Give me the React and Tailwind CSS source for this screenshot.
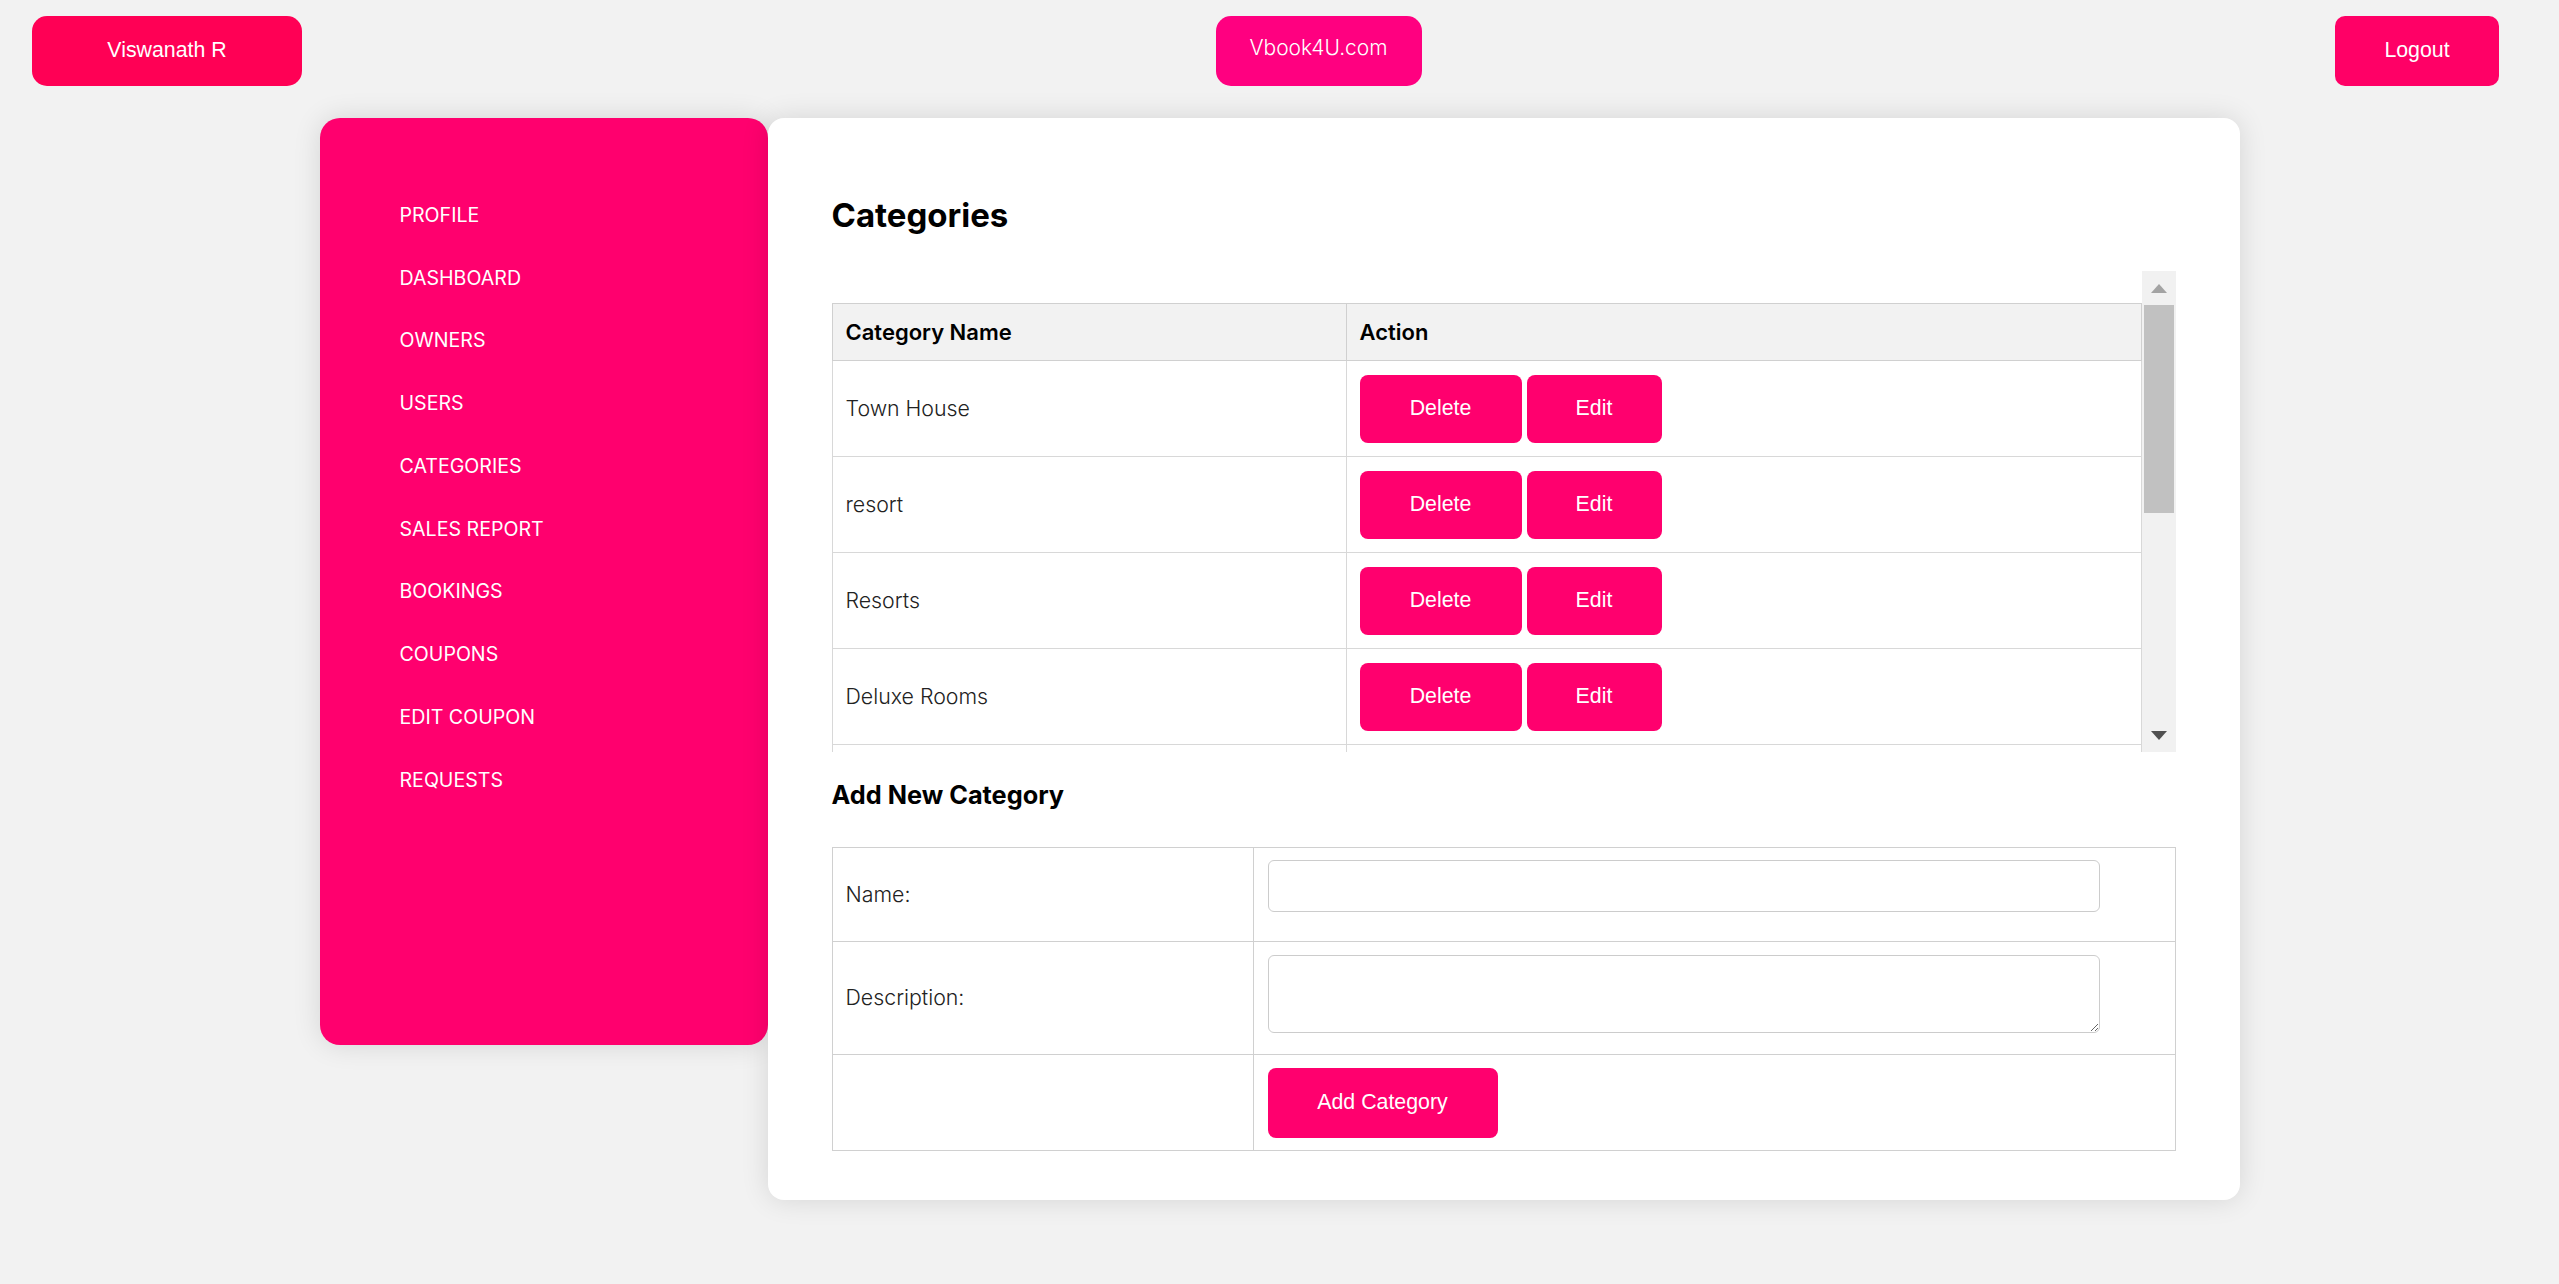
import React from "react";

const navItems = [
  "PROFILE",
  "DASHBOARD",
  "OWNERS",
  "USERS",
  "CATEGORIES",
  "SALES REPORT",
  "BOOKINGS",
  "COUPONS",
  "EDIT COUPON",
  "REQUESTS",
];

const categories = ["Town House", "resort", "Resorts", "Deluxe Rooms"];

function Scrollbar() {
  return (
    <div className="flex h-full w-[34px] flex-col bg-[#f1f1f1]">
      <div className="flex h-[34px] items-center justify-center">
        <svg width="16" height="9" viewBox="0 0 16 9">
          <polygon points="8,0 16,9 0,9" fill="#a3a3a3" />
        </svg>
      </div>
      <div className="mx-[2px] h-[208px] bg-[#c1c1c1]" />
      <div className="flex-1" />
      <div className="flex h-[34px] items-center justify-center">
        <svg width="16" height="9" viewBox="0 0 16 9">
          <polygon points="0,0 16,0 8,9" fill="#505050" />
        </svg>
      </div>
    </div>
  );
}

export default function App() {
  return (
    <div className="min-h-screen bg-[#f2f2f2] font-['Inter',sans-serif]">
      <header className="flex items-start justify-between pl-[32px] pr-[60px] pt-[16px]">
        <button className="h-[70px] w-[270px] rounded-[15px] bg-[#ff0055] font-['Liberation_Sans',Arial,sans-serif] text-[21.33px] text-white">
          Viswanath R
        </button>
        <button className="h-[70px] w-[206px] rounded-[15px] bg-[#ff0080] pb-[6px] text-[21px] font-light text-white">
          Vbook4U.com
        </button>
        <button className="h-[70px] w-[164px] rounded-[10px] bg-[#ff0066] font-['Liberation_Sans',Arial,sans-serif] text-[21.33px] text-white">
          Logout
        </button>
      </header>

      <div className="mx-auto mt-[32px] flex w-[1920px] items-start">
        <aside className="h-[927px] w-[448px] shrink-0 rounded-[20px] bg-[#ff006e] pl-[80px] pt-[66px] shadow-[0_0_28px_rgba(0,0,0,0.12)]">
          <nav className="flex flex-col">
            {navItems.map((item) => (
              <a
                key={item}
                className="flex h-[62.8px] items-center text-[19.6px] text-white"
              >
                {item}
              </a>
            ))}
          </nav>
        </aside>

        <main className="w-[1472px] shrink-0 rounded-[16px] bg-white px-[64px] pb-[49px] pt-[73px] shadow-[0_0_28px_rgba(0,0,0,0.12)]">
          <h2 className="text-[33px] font-bold leading-[48px] text-black">
            Categories
          </h2>

          <div className="mt-[32px] flex h-[481px]">
            <div className="h-full flex-1 overflow-hidden pt-[32px]">
              <table className="w-full table-fixed border-collapse text-[21.33px] text-[#222]">
                <colgroup>
                  <col className="w-[514px]" />
                  <col />
                </colgroup>
                <thead>
                  <tr className="h-[57px] bg-[#f2f2f2]">
                    <th className="border border-[#d0d0d0] px-[13px] text-left text-[22px] font-semibold text-black">
                      Category Name
                    </th>
                    <th className="border border-[#d0d0d0] px-[13px] text-left text-[22px] font-semibold text-black">
                      Action
                    </th>
                  </tr>
                </thead>
                <tbody>
                  {categories.map((c) => (
                    <tr key={c} className="h-[96px]">
                      <td className="border border-[#d8d8d8] px-[13px] font-light">
                        {c}
                      </td>
                      <td className="border border-[#d8d8d8] px-[13px]">
                        <div className="flex gap-[5px]">
                          <button className="h-[68px] w-[162px] rounded-[8px] bg-[#ff006e] font-['Liberation_Sans',Arial,sans-serif] text-[21.33px] text-white">
                            Delete
                          </button>
                          <button className="h-[68px] w-[135px] rounded-[8px] bg-[#ff006e] font-['Liberation_Sans',Arial,sans-serif] text-[21.33px] text-white">
                            Edit
                          </button>
                        </div>
                      </td>
                    </tr>
                  ))}
                  <tr className="h-[96px]">
                    <td className="border border-[#d8d8d8]"></td>
                    <td className="border border-[#d8d8d8]"></td>
                  </tr>
                </tbody>
              </table>
            </div>
            <Scrollbar />
          </div>

          <h3 className="mt-[25px] text-[25.3px] font-bold leading-[36px] text-black">
            Add New Category
          </h3>

          <table className="mt-[34px] w-full table-fixed border-collapse text-[21.33px] text-[#222]">
            <colgroup>
              <col className="w-[421px]" />
              <col />
            </colgroup>
            <tbody>
              <tr className="h-[94px]">
                <td className="border border-[#d0d0d0] px-[13px] font-light">
                  Name:
                </td>
                <td className="border border-[#d0d0d0] px-[14px] pb-[22px] pt-[12px] align-top">
                  <input
                    type="text"
                    className="block h-[52px] w-[832px] rounded-[6px] border border-[#cccccc] bg-white"
                  />
                </td>
              </tr>
              <tr className="h-[113px]">
                <td className="border border-[#d0d0d0] px-[13px] font-light">
                  Description:
                </td>
                <td className="border border-[#d0d0d0] px-[14px] pb-[20px] pt-[13px] align-top">
                  <textarea className="block h-[78px] w-[832px] resize rounded-[6px] border border-[#cccccc] bg-white" />
                </td>
              </tr>
              <tr className="h-[96px]">
                <td className="border border-[#d0d0d0]"></td>
                <td className="border border-[#d0d0d0] px-[14px] pb-[12px] pt-[13px] align-top">
                  <button className="h-[70px] w-[230px] rounded-[8px] bg-[#ff006e] font-['Liberation_Sans',Arial,sans-serif] text-[21.33px] text-white">
                    Add Category
                  </button>
                </td>
              </tr>
            </tbody>
          </table>
        </main>
      </div>
    </div>
  );
}
